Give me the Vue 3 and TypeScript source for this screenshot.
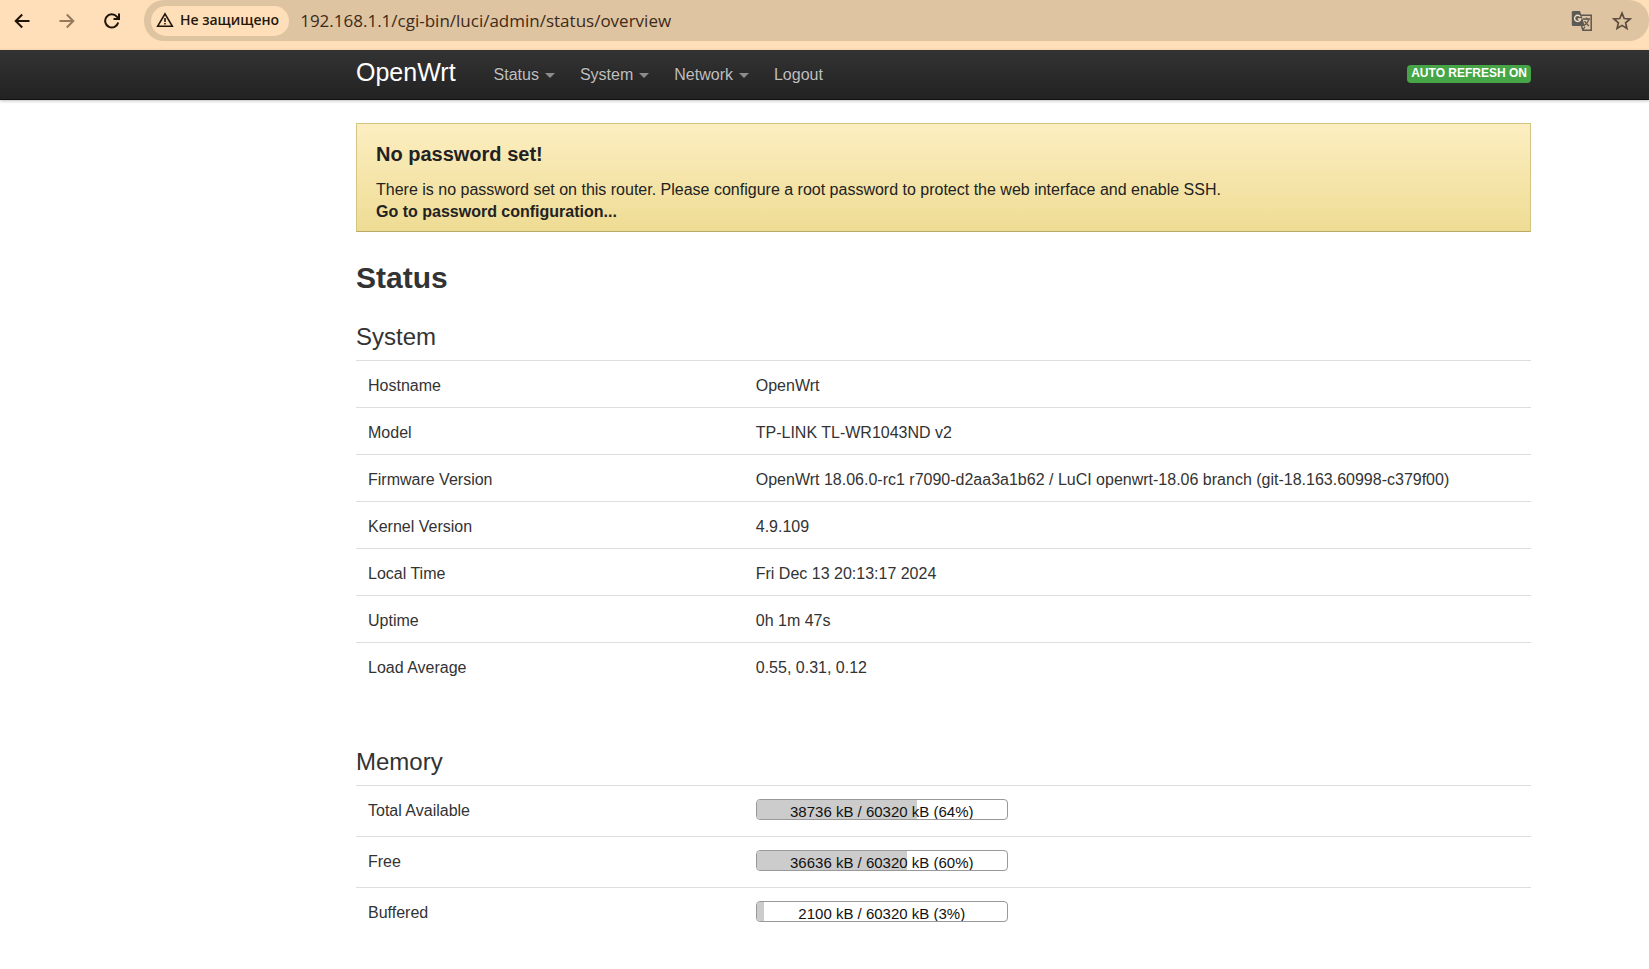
<script setup lang="ts">
interface NavItem {
  label: string
  menu: boolean
}

interface InfoRow {
  label: string
  value: string
}

interface MemoryRow {
  label: string
  used: number
  total: number
}

const navItems: NavItem[] = [
  { label: 'Status', menu: true },
  { label: 'System', menu: true },
  { label: 'Network', menu: true },
  { label: 'Logout', menu: false },
]

const systemRows: InfoRow[] = [
  { label: 'Hostname', value: 'OpenWrt' },
  { label: 'Model', value: 'TP-LINK TL-WR1043ND v2' },
  {
    label: 'Firmware Version',
    value: 'OpenWrt 18.06.0-rc1 r7090-d2aa3a1b62 / LuCI openwrt-18.06 branch (git-18.163.60998-c379f00)',
  },
  { label: 'Kernel Version', value: '4.9.109' },
  { label: 'Local Time', value: 'Fri Dec 13 20:13:17 2024' },
  { label: 'Uptime', value: '0h 1m 47s' },
  { label: 'Load Average', value: '0.55, 0.31, 0.12' },
]

const memoryRows: MemoryRow[] = [
  { label: 'Total Available', used: 38736, total: 60320 },
  { label: 'Free', used: 36636, total: 60320 },
  { label: 'Buffered', used: 2100, total: 60320 },
]

const percent = (row: MemoryRow): number => Math.floor((100 * row.used) / row.total)
</script>

<template>
  <div class="page">
    <div class="toolbar">
      <div class="nav-buttons">
        <button type="button" class="icon-button" aria-label="Назад">
          <svg width="16" height="16" viewBox="0 0 16 16" fill="none" stroke="#1f1408" stroke-width="2">
            <path d="M15.5 8H2M8.2 1.5L1.7 8l6.5 6.5" />
          </svg>
        </button>
        <button type="button" class="icon-button" aria-label="Вперёд">
          <svg width="16" height="16" viewBox="0 0 16 16" fill="none" stroke="#94795a" stroke-width="2">
            <path d="M.5 8H14M7.8 1.5L14.3 8l-6.5 6.5" />
          </svg>
        </button>
        <button type="button" class="icon-button" aria-label="Обновить">
          <svg width="16" height="16" viewBox="0 0 16 16" fill="none" stroke="#1f1408" stroke-width="2">
            <path d="M14.2 9.5A6.6 6.6 0 1 1 12.8 3.6L14.5 5.5" />
            <path d="M15 .5V6H9.5" />
          </svg>
        </button>
      </div>
      <div class="address-bar">
        <button type="button" class="security">
          <svg width="18" height="16" viewBox="0 0 18 16" fill="none" stroke="#1f1408">
            <path d="M9 1.8L16.3 14.2H1.7Z" stroke-width="1.6" />
            <path d="M9 6v4M9 11v1.6" stroke-width="1.6" />
          </svg>
          <span>Не защищено</span>
        </button>
        <input class="url" type="text" aria-label="Адрес" value="192.168.1.1/cgi-bin/luci/admin/status/overview" />
        <button type="button" class="icon-button" aria-label="Перевести">
          <svg width="22" height="22" viewBox="0 0 22 22">
            <path d="M8.5 5.2H20.2V20.2H12L10.5 16" fill="none" stroke="#5d564e" stroke-width="1.5" />
            <path d="M2 1H9L13.8 16H2A1.2 1.2 0 0 1 .8 14.800V2.200A1.2 1.2 0 0 1 2 1Z" fill="#5d5a55" />
            <path d="M9.200 6.600A3.100 3.100 0 1 0 9.700 9H6.800" fill="none" stroke="#f3dfc4" stroke-width="1.400" />
            <path d="M12 9H19M15.500 7.500V9M17.700 9C17.200 12 15.500 14 13.200 15.300M13.500 11C14.500 13 16 14.500 18 16M11.500 20.500L14 16.500" fill="none" stroke="#5d564e" stroke-width="1.300" />
          </svg>
        </button>
        <button type="button" class="icon-button" aria-label="Добавить в закладки">
          <svg width="20" height="20" viewBox="0 0 20 20">
            <path d="M10 2.200L12.200 7.500L18 8L13.600 11.800L14.900 17.400L10 14.400L5.100 17.400L6.400 11.800L2 8L7.800 7.500Z" fill="none" stroke="#5a4c3e" stroke-width="1.700" />
          </svg>
        </button>
      </div>
    </div>

    <header class="header">
      <a class="brand" href="#">OpenWrt</a>
      <nav class="menu">
        <a v-for="item in navItems" :key="item.label" href="#" class="menu-link">
          {{ item.label }}<span v-if="item.menu" class="caret"></span>
        </a>
      </nav>
      <button type="button" class="refresh">AUTO REFRESH ON</button>
    </header>

    <main class="content">
      <section class="alert">
        <h4>No password set!</h4>
        <p>There is no password set on this router. Please configure a root password to protect the web interface and enable SSH.</p>
        <a href="#">Go to password configuration...</a>
      </section>

      <h2>Status</h2>

      <section class="group">
        <h3>System</h3>
        <table>
          <tbody>
            <tr v-for="row in systemRows" :key="row.label">
              <th scope="row">{{ row.label }}</th>
              <td>{{ row.value }}</td>
            </tr>
          </tbody>
        </table>
      </section>

      <section class="group">
        <h3>Memory</h3>
        <table class="memory">
          <tbody>
            <tr v-for="row in memoryRows" :key="row.label">
              <th scope="row">{{ row.label }}</th>
              <td>
                <div class="meter">
                  <div class="meter-fill" :style="{ width: percent(row) + '%' }"></div>
                  <span class="meter-text">{{ row.used }} kB / {{ row.total }} kB ({{ percent(row) }}%)</span>
                </div>
              </td>
            </tr>
          </tbody>
        </table>
      </section>
    </main>
  </div>
</template>

<style>
body {
  margin: 0;
  background: #fff;
}
</style>

<style scoped>
.page {
  box-sizing: border-box;
  min-height: 100vh;
  font-family: "Liberation Sans", Arial, sans-serif;
  font-size: 16px;
  line-height: 22px;
  color: #333;
}

button {
  border: 0;
  padding: 0;
  margin: 0;
  background: none;
  font: inherit;
  color: inherit;
  cursor: pointer;
}

a {
  text-decoration: none;
}

.toolbar {
  display: flex;
  background: #ffdfb9;
  padding-bottom: 9px;
}

.nav-buttons {
  display: flex;
  align-items: center;
  gap: 29px;
  padding: 0 24px 0 14px;
}

.icon-button {
  display: flex;
  flex: none;
  align-items: center;
  justify-content: center;
}

.nav-buttons .icon-button {
  width: 16px;
}

.address-bar {
  display: flex;
  flex: 1;
  align-items: center;
  box-sizing: border-box;
  height: 41px;
  padding: 0 17px 0 7px;
  border-radius: 20px;
  background: #dfc4a2;
}

.security {
  display: flex;
  flex: none;
  align-items: center;
  gap: 6px;
  height: 30px;
  padding: 0 10px 2px 5px;
  box-sizing: border-box;
  border-radius: 15px;
  background: #ffdfb9;
  font-family: "Open Sans", "Noto Sans", sans-serif;
  font-size: 14px;
  font-weight: 600;
  color: #24180b;
}

.url {
  flex: 1;
  min-width: 0;
  margin: 0 16px 0 11px;
  padding: 0;
  border: 0;
  outline: 0;
  background: transparent;
  font-family: "Open Sans", "Noto Sans", sans-serif;
  font-size: 17px;
  line-height: 24px;
  color: #3d2b18;
}

.address-bar > .icon-button + .icon-button {
  margin-left: 19px;
}

.header {
  display: flex;
  align-items: center;
  box-sizing: border-box;
  height: 50px;
  padding: 0 118px 0 356px;
  border-bottom: 1px solid #111;
  background: linear-gradient(#333, #222);
  box-shadow: 0 1px 3px rgba(0, 0, 0, 0.25);
}

.brand {
  margin-right: 38px;
  padding-bottom: 6px;
  font-size: 25px;
  line-height: 26px;
  color: #fff;
}

.menu {
  display: flex;
  flex: 1;
  gap: 25px;
}

.menu-link {
  display: flex;
  align-items: center;
  color: #bfbfbf;
  text-shadow: 0 -1px 0 rgba(0, 0, 0, 0.25);
}

.caret {
  margin: 2px 0 0 6px;
  border-left: 5px solid transparent;
  border-right: 5px solid transparent;
  border-top: 5px solid #8c8c8c;
}

.refresh {
  height: 18px;
  margin-bottom: 2px;
  padding: 0 4px 2px;
  border-radius: 4px;
  background: #46a546;
  font-size: 12px;
  line-height: 16px;
  font-weight: 700;
  color: #fff;
}

.content {
  padding: 23px 118px 0 356px;
}

.alert {
  padding: 17px 19px 8px;
  border: 1px solid #d3c583;
  border-bottom-color: #b8aa6a;
  background: linear-gradient(#fceec1, #eedc94);
  color: #222;
}

.alert h4 {
  margin: 0 0 12px;
  font-size: 20px;
  line-height: 26px;
}

.alert p {
  margin: 0;
}

.alert a {
  font-weight: 700;
  color: #222;
}

h2 {
  margin: 23px 0 18px;
  font-size: 30px;
  line-height: 45px;
  color: #333;
}

h3 {
  margin: 0;
  padding-bottom: 4px;
  font-size: 24px;
  line-height: 38px;
  font-weight: 400;
  color: #333;
}

.group {
  margin-bottom: 54px;
}

table {
  width: 100%;
  border-collapse: separate;
  border-spacing: 0;
  table-layout: fixed;
}

th,
td {
  padding: 14px 12px 10px;
  border-top: 1px solid #ddd;
  text-align: left;
  font-weight: 400;
  vertical-align: top;
}

th {
  width: 33%;
  box-sizing: border-box;
}

.memory td {
  padding: 13px 12px 16px;
}

.meter {
  position: relative;
  box-sizing: border-box;
  width: 252px;
  height: 21px;
  overflow: hidden;
  border: 1px solid #999;
  border-radius: 4px;
  background: #fff;
}

.meter-fill {
  height: 100%;
  background: #ccc;
}

.meter-text {
  position: absolute;
  inset: 2px 0 0;
  font-size: 15px;
  line-height: 20px;
  text-align: center;
  color: #111;
}
</style>
